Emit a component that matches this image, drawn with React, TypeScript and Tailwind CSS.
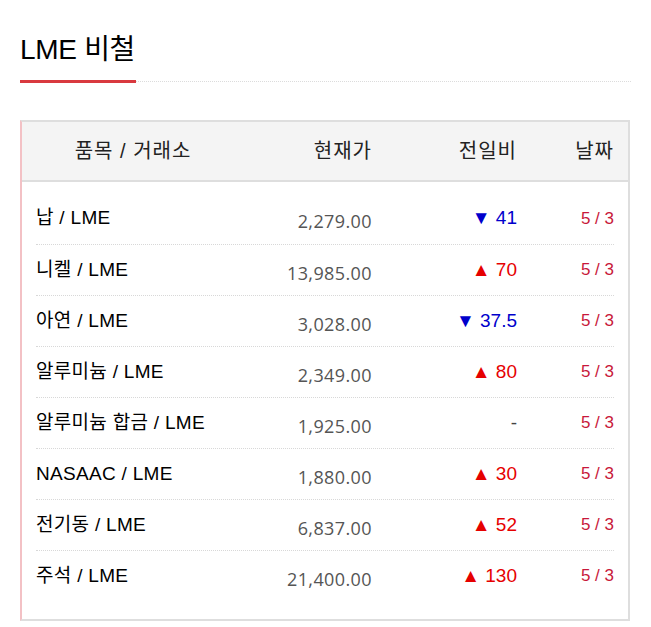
import React from "react";

const rows = [
  { name: "납 / LME", price: "2,279.00", dir: "down", chg: "41" },
  { name: "니켈 / LME", price: "13,985.00", dir: "up", chg: "70" },
  { name: "아연 / LME", price: "3,028.00", dir: "down", chg: "37.5" },
  { name: "알루미늄 / LME", price: "2,349.00", dir: "up", chg: "80" },
  { name: "알루미늄 합금 / LME", price: "1,925.00", dir: "none", chg: "-" },
  { name: "NASAAC / LME", price: "1,880.00", dir: "up", chg: "30" },
  { name: "전기동 / LME", price: "6,837.00", dir: "up", chg: "52" },
  { name: "주석 / LME", price: "21,400.00", dir: "up", chg: "130" },
];

const ko = { fontFamily: '"Liberation Sans", "Noto Sans CJK KR", sans-serif' };
const num = { fontFamily: '"Open Sans", "Liberation Sans", sans-serif' };

export default function App() {
  return (
    <div className="w-[651px] h-[627px] bg-white px-[20px] pt-[32px]" style={ko}>
      <h1 className="text-[28px] leading-[36px] text-black tracking-[-0.3px]">LME 비철</h1>
      <div className="relative mt-[12px] h-[3px]">
        <div className="absolute left-0 right-0 top-[1px] border-t border-dotted border-[#dcdcdc]" />
        <div className="absolute left-0 top-0 h-[3px] w-[116px] bg-[#d9393f]" />
      </div>
      <div className="mt-[37px] w-[610px] border-2 border-[#dedede] border-l-[#f3c1c5]">
        <div className="grid grid-cols-[208px_128px_145px_97px] px-[14px] h-[60px] items-center bg-[#f4f4f4] border-b-2 border-[#dedede] text-[20px] tracking-[1px] text-[#222]">
          <div className="text-center pr-[14px]">품목 / 거래소</div>
          <div className="text-right">현재가</div>
          <div className="text-right">전일비</div>
          <div className="text-right">날짜</div>
        </div>
        <div className="px-[14px] pt-[11px] pb-[18px]">
          {rows.map((r, i) => (
            <div
              key={i}
              className={
                "grid grid-cols-[208px_128px_145px_97px] h-[51px] items-center " +
                (i > 0 ? "border-t border-dotted border-[#d8d8d8]" : "")
              }
            >
              <div className="text-[19px] text-black tracking-[0.3px] whitespace-nowrap">{r.name}</div>
              <div className="text-right text-[18px] tracking-[0.4px] text-[#555] pt-[6px]" style={num}>{r.price}</div>
              <div
                className={
                  "text-right text-[19px] " +
                  (r.dir === "up" ? "text-[#e60000]" : r.dir === "down" ? "text-[#0000cc]" : "text-[#444]")
                }
              >
                {r.dir === "up" ? "▲ " : r.dir === "down" ? "▼ " : ""}
                {r.chg}
              </div>
              <div className="text-right text-[17px] text-[#c8183a]">5 / 3</div>
            </div>
          ))}
        </div>
      </div>
    </div>
  );
}
